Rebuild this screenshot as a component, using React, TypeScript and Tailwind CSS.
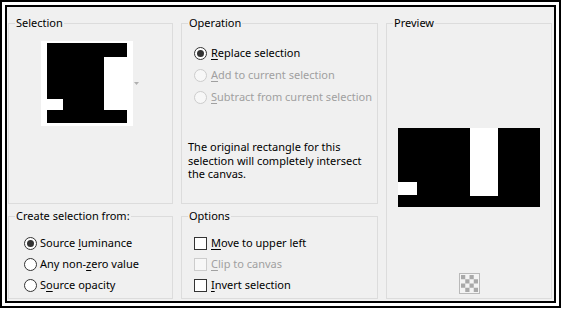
import React from "react";

const FONT = "font-['Noto_Sans',sans-serif] text-[11px] text-black whitespace-nowrap";

function Radio({ checked = false, disabled = false }: { checked?: boolean; disabled?: boolean }) {
  return (
    <span
      className={
        "w-[13px] h-[13px] rounded-full border flex items-center justify-center shrink-0 " +
        (disabled ? "border-[#cccccc] bg-[#f7f7f7]" : "border-[#333333] bg-white")
      }
    >
      {checked && <span className="w-[7px] h-[7px] rounded-full bg-[#333333]" />}
    </span>
  );
}

function Check({ disabled = false }: { disabled?: boolean }) {
  return (
    <span
      className={
        "w-[13px] h-[13px] border shrink-0 " +
        (disabled ? "border-[#cccccc] bg-[#f7f7f7]" : "border-[#333333] bg-white")
      }
    />
  );
}

function Acc({ children }: { children: React.ReactNode }) {
  return <span className="underline underline-offset-[2px] decoration-1">{children}</span>;
}

function Legend({ children }: { children: React.ReactNode }) {
  return <legend className="ml-[6px] px-[1px] leading-[16px]">{children}</legend>;
}

function Thumbnail() {
  return (
    <svg width="92" height="85" viewBox="0 0 92 85" className="block">
      <rect x="0" y="0" width="92" height="85" fill="#fff" />
      <rect x="6" y="2" width="80" height="80" fill="#000" />
      <rect x="63" y="16" width="23" height="53" fill="#fff" />
      <rect x="6" y="58" width="16" height="11" fill="#fff" />
    </svg>
  );
}

function PreviewImage() {
  return (
    <svg width="142" height="79" viewBox="0 0 142 79" className="block">
      <rect x="0" y="0" width="142" height="79" fill="#000" />
      <rect x="72" y="0" width="28" height="68" fill="#fff" />
      <rect x="0" y="54" width="19" height="13" fill="#fff" />
    </svg>
  );
}

function Checker() {
  const cells: React.ReactNode[] = [];
  for (let r = 0; r < 4; r++) {
    for (let c = 0; c < 4; c++) {
      if ((r + c) % 2 === 0) {
        cells.push(<rect key={r + "-" + c} x={2 + c * 4.25} y={2 + r * 4.25} width="4.25" height="4.25" fill="#a9a9a9" />);
      }
    }
  }
  return (
    <svg width="21" height="21" viewBox="0 0 21 21" className="block">
      <rect x="0.5" y="0.5" width="20" height="20" fill="#f4f4f4" stroke="#b9b9b9" />
      {cells}
    </svg>
  );
}

export default function App() {
  return (
    <div className={"w-[562px] h-[309px] bg-white " + FONT}>
      <div className="w-[561px] h-[308px] border-2 border-black p-[3px] bg-white">
        <div className="h-full border-2 border-black bg-[#f0f0f0] pt-[8px] pl-[1px]">
          <div className="grid grid-cols-[165px_197px_166px] grid-rows-[189px_91px] gap-x-[8px] gap-y-[4px]">
            {/* Selection */}
            <fieldset className="border border-[#dcdcdc] min-w-0">
              <Legend>Selection</Legend>
              <div className="flex items-start pl-[32px] pt-[10px]">
                <Thumbnail />
                <svg width="5" height="3" viewBox="0 0 5 3" className="ml-[1px] mt-[41px]">
                  <path d="M0 0 H5 L2.5 3 Z" fill="#b0b0b0" />
                </svg>
              </div>
            </fieldset>

            {/* Operation */}
            <fieldset className="border border-[#dcdcdc] min-w-0">
              <Legend>Operation</Legend>
              <div className="flex flex-col pt-[11px] pl-[12px]">
                <div className="h-[22px] flex items-center gap-[4px]">
                  <Radio checked />
                  <span>
                    <Acc>R</Acc>eplace selection
                  </span>
                </div>
                <div className="h-[22px] flex items-center gap-[4px] text-[#a0a0a0]">
                  <Radio disabled />
                  <span>
                    <Acc>A</Acc>dd to current selection
                  </span>
                </div>
                <div className="h-[22px] flex items-center gap-[4px] text-[#a0a0a0]">
                  <Radio disabled />
                  <span>
                    <Acc>S</Acc>ubtract from current selection
                  </span>
                </div>
              </div>
              <p className="pl-[6px] mt-[32px] leading-[13.5px] w-[190px]">
                The original rectangle for this
                <br />
                selection will completely intersect
                <br />
                the canvas.
              </p>
            </fieldset>

            {/* Preview */}
            <fieldset className="row-span-2 border border-[#dcdcdc] min-w-0 flex flex-col">
              <Legend>Preview</Legend>
              <div className="flex flex-col items-center h-full">
                <div className="mt-[97px]">
                  <PreviewImage />
                </div>
                <div className="mt-[66px]">
                  <Checker />
                </div>
              </div>
            </fieldset>

            {/* Create selection from */}
            <fieldset className="border border-[#dcdcdc] min-w-0">
              <Legend>Create selection from:</Legend>
              <div className="flex flex-col pt-[9px] pl-[15px]">
                <div className="h-[21px] flex items-center gap-[3px]">
                  <Radio checked />
                  <span>
                    Source <Acc>l</Acc>uminance
                  </span>
                </div>
                <div className="h-[21px] flex items-center gap-[3px]">
                  <Radio />
                  <span>
                    Any non-<Acc>z</Acc>ero value
                  </span>
                </div>
                <div className="h-[21px] flex items-center gap-[3px]">
                  <Radio />
                  <span>
                    S<Acc>o</Acc>urce opacity
                  </span>
                </div>
              </div>
            </fieldset>

            {/* Options */}
            <fieldset className="border border-[#dcdcdc] min-w-0">
              <Legend>Options</Legend>
              <div className="flex flex-col pt-[9px] pl-[12px]">
                <div className="h-[21px] flex items-center gap-[4px]">
                  <Check />
                  <span>
                    <Acc>M</Acc>ove to upper left
                  </span>
                </div>
                <div className="h-[21px] flex items-center gap-[4px] text-[#a0a0a0]">
                  <Check disabled />
                  <span>
                    <Acc>C</Acc>lip to canvas
                  </span>
                </div>
                <div className="h-[21px] flex items-center gap-[4px]">
                  <Check />
                  <span>
                    <Acc>I</Acc>nvert selection
                  </span>
                </div>
              </div>
            </fieldset>
          </div>
        </div>
      </div>
    </div>
  );
}
